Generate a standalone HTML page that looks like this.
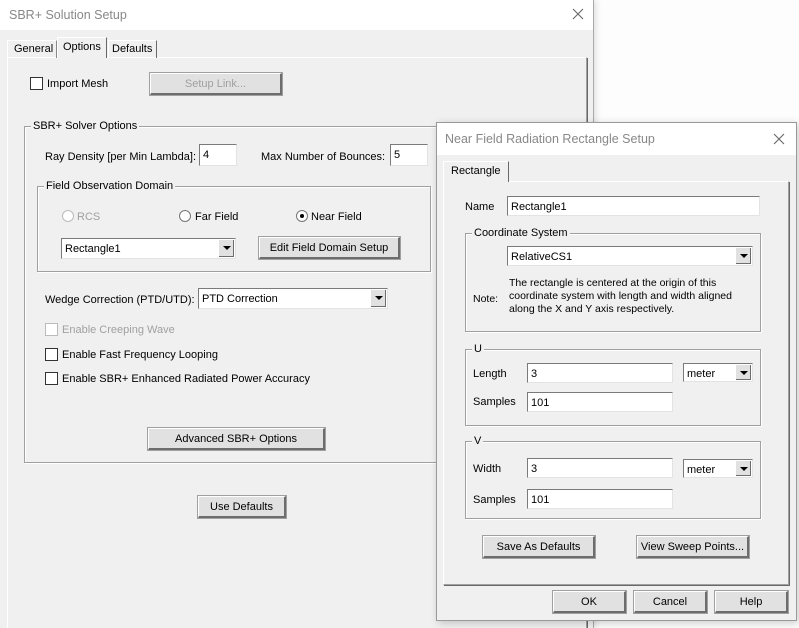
<!DOCTYPE html>
<html><head><style>
*{box-sizing:border-box;margin:0;padding:0}
html,body{width:799px;height:628px;overflow:hidden}
body{position:relative;background:#fdfdfd;font-family:"Liberation Sans",sans-serif;font-size:11px;color:#000}
.a{position:absolute}
.t{position:absolute;white-space:nowrap;line-height:14px}
.dis{color:#a0a0a0}
.in{position:absolute;background:#fff;border:1px solid #7a7a7a;border-right-color:#e3e3e3;border-bottom-color:#e3e3e3;padding:3px 3px 1px;line-height:14px}
.btn{position:absolute;background:#e1e1e1;border:1px solid #fff;border-right:2px solid #6d6d6d;border-bottom:2px solid #6d6d6d;outline:1px solid #a0a0a0;text-align:center;line-height:20px}
.grp{position:absolute;border:1px solid #a0a0a0;box-shadow:inset 1px 1px 0 #fff,1px 1px 0 #fff}
.grp>span{position:absolute;top:-8px;left:6px;background:#f0f0f0;padding:0 2px;line-height:14px;white-space:nowrap}
.cb{position:absolute;width:13px;height:13px;background:#fff;border:1px solid #333}
.rad{position:absolute;width:12px;height:12px;border-radius:50%;background:#fff;border:1px solid #777}
.arr{position:absolute;right:1px;top:1px;bottom:1px;width:16px;background:#e1e1e1;border-left:1px solid #fff;box-shadow:inset -1px -1px 0 #6d6d6d}
.arr:after{content:"";position:absolute;left:4px;top:6px;border:4px solid transparent;border-top:4px solid #000;border-bottom:0}
</style></head><body>
<div class="a" style="left:0;top:0;width:594px;height:628px;background:#f0f0f0;border-right:1px solid #aaa;box-shadow:2px 0 6px rgba(0,0,0,.12)"></div>
<div class="a" style="left:0;top:0;width:593px;height:30px;background:#fff"></div>
<div class="t" style="left:9px;top:8px;font-size:12.5px;color:#888">SBR+ Solution Setup</div>
<svg class="a" style="left:572px;top:8px" width="12" height="12"><path d="M1 1L11 11M11 1L1 11" stroke="#666" stroke-width="1.1"/></svg>
<div class="a" style="left:7px;top:57px;width:580px;height:600px;border:1px solid #a0a0a0;border-top-color:#fff;border-left-color:#fff;box-shadow:1px 1px 0 #696969"></div>
<div class="a" style="left:7px;top:40px;width:50px;height:18px;border:1px solid #fff;border-right:1px solid #888;border-bottom:0"></div>
<div class="t" style="left:14px;top:42px">General</div>
<div class="a" style="left:57px;top:37px;width:50px;height:21px;background:#f0f0f0;border:1px solid #fff;border-right:1px solid #696969;border-bottom:0"></div>
<div class="t" style="left:63px;top:40px">Options</div>
<div class="a" style="left:108px;top:40px;width:49px;height:18px;border:1px solid #fff;border-right:1px solid #696969;border-bottom:0"></div>
<div class="t" style="left:112px;top:42px">Defaults</div>

<div class="cb" style="left:30px;top:77px"></div>
<div class="t" style="left:47px;top:77px">Import Mesh</div>
<div class="btn dis" style="left:150px;top:73px;width:132px;height:22px">Setup Link...</div>

<div class="grp" style="left:24px;top:126px;width:580px;height:337px"><span>SBR+ Solver Options</span></div>
<div class="t" style="left:45px;top:150px">Ray Density [per Min Lambda]:</div>
<div class="in" style="left:199px;top:144px;width:38px;height:22px">4</div>
<div class="t" style="left:261px;top:150px">Max Number of Bounces:</div>
<div class="in" style="left:390px;top:144px;width:38px;height:22px">5</div>

<div class="grp" style="left:37px;top:186px;width:394px;height:86px"><span>Field Observation Domain</span></div>
<div class="rad" style="left:62px;top:210px;border-color:#bbb"></div>
<div class="t dis" style="left:77px;top:210px">RCS</div>
<div class="rad" style="left:179px;top:210px"></div>
<div class="t" style="left:195px;top:210px">Far Field</div>
<div class="rad" style="left:296px;top:210px"><div class="a" style="left:3px;top:3px;width:4px;height:4px;border-radius:50%;background:#000"></div></div>
<div class="t" style="left:311px;top:210px">Near Field</div>
<div class="in" style="left:61px;top:238px;width:175px;height:21px">Rectangle1<div class="arr"></div></div>
<div class="btn" style="left:259px;top:237px;width:141px;height:22px">Edit Field Domain Setup</div>

<div class="t" style="left:45px;top:293px">Wedge Correction (PTD/UTD):</div>
<div class="in" style="left:198px;top:288px;width:190px;height:21px">PTD Correction<div class="arr"></div></div>
<div class="cb" style="left:45px;top:323px;border-color:#bbb"></div>
<div class="t dis" style="left:62px;top:323px">Enable Creeping Wave</div>
<div class="cb" style="left:45px;top:348px"></div>
<div class="t" style="left:62px;top:348px">Enable Fast Frequency Looping</div>
<div class="cb" style="left:45px;top:372px"></div>
<div class="t" style="left:62px;top:372px">Enable SBR+ Enhanced Radiated Power Accuracy</div>
<div class="btn" style="left:148px;top:428px;width:177px;height:22px">Advanced SBR+ Options</div>
<div class="btn" style="left:198px;top:496px;width:88px;height:22px">Use Defaults</div>

<div class="a" style="left:436px;top:122px;width:361px;height:499px;background:#f0f0f0;border:1px solid #999;box-shadow:2px 2px 8px rgba(0,0,0,.2)"></div>
<div class="a" style="left:437px;top:123px;width:359px;height:32px;background:#fff"></div>
<div class="t" style="left:445px;top:132px;font-size:12.5px;color:#888">Near Field Radiation Rectangle Setup</div>
<svg class="a" style="left:773px;top:133px" width="12" height="12"><path d="M1 1L11 11M11 1L1 11" stroke="#666" stroke-width="1.1"/></svg>
<div class="a" style="left:443px;top:181px;width:346px;height:404px;border:1px solid #a0a0a0;border-top-color:#fff;border-left-color:#fff;box-shadow:1px 1px 0 #696969"></div>
<div class="a" style="left:443px;top:161px;width:66px;height:21px;background:#f0f0f0;border:1px solid #fff;border-right:1px solid #696969;border-bottom:0"></div>
<div class="t" style="left:451px;top:164px">Rectangle</div>

<div class="t" style="left:465px;top:200px">Name</div>
<div class="in" style="left:507px;top:196px;width:253px;height:20px">Rectangle1</div>
<div class="grp" style="left:465px;top:233px;width:296px;height:99px"><span>Coordinate System</span></div>
<div class="in" style="left:507px;top:246px;width:246px;height:20px">RelativeCS1<div class="arr"></div></div>
<div class="t" style="left:473px;top:292px;font-size:10.5px">Note:</div>
<div class="t" style="left:509px;top:277px;font-size:10.5px;line-height:13px">The rectangle is centered at the origin of this<br>coordinate system with length and width aligned<br>along the X and Y axis respectively.</div>

<div class="grp" style="left:465px;top:349px;width:296px;height:77px"><span>U</span></div>
<div class="t" style="left:473px;top:367px">Length</div>
<div class="in" style="left:527px;top:363px;width:146px;height:20px">3</div>
<div class="in" style="left:683px;top:363px;width:70px;height:19px">meter<div class="arr"></div></div>
<div class="t" style="left:473px;top:395px">Samples</div>
<div class="in" style="left:527px;top:392px;width:146px;height:20px">101</div>

<div class="grp" style="left:465px;top:441px;width:296px;height:78px"><span>V</span></div>
<div class="t" style="left:473px;top:462px">Width</div>
<div class="in" style="left:527px;top:458px;width:146px;height:20px">3</div>
<div class="in" style="left:683px;top:459px;width:70px;height:19px">meter<div class="arr"></div></div>
<div class="t" style="left:473px;top:493px">Samples</div>
<div class="in" style="left:527px;top:489px;width:146px;height:20px">101</div>

<div class="btn" style="left:483px;top:536px;width:112px;height:22px">Save As Defaults</div>
<div class="btn" style="left:637px;top:536px;width:112px;height:22px">View Sweep Points...</div>
<div class="btn" style="left:553px;top:591px;width:73px;height:22px">OK</div>
<div class="btn" style="left:634px;top:591px;width:73px;height:22px">Cancel</div>
<div class="btn" style="left:715px;top:591px;width:73px;height:22px">Help</div>
</body></html>
